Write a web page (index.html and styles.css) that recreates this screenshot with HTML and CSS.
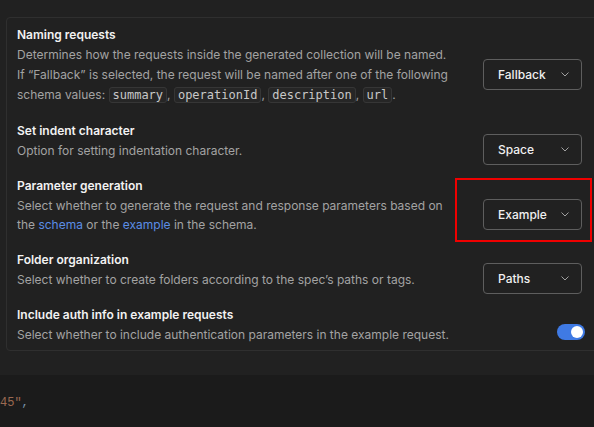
FILE: index.html
```html
<!DOCTYPE html>
<html>
<head>
<meta charset="utf-8">
<link rel="stylesheet" href="styles.css">
</head>
<body>
<div class="top">
  <div class="panel">
    <div class="row">
      <div class="text">
        <div class="title">Naming requests</div>
        <div class="desc">Determines how the requests inside the generated collection will be named.<br>If “Fallback” is selected, the request will be named after one of the following<br><span class="codeline">schema values: <code>summary</code>, <code>operationId</code>, <code>description</code>, <code>url</code>.</span></div>
      </div>
      <div class="ctl"><div class="select"><span>Fallback</span><svg class="chev" width="8" height="5" viewBox="0 0 8 5"><path d="M0.5 0.5l3.5 3.5 3.5-3.5" fill="none" stroke="#a0a0a0" stroke-width="1"/></svg></div></div>
    </div>
    <div class="row">
      <div class="text">
        <div class="title">Set indent character</div>
        <div class="desc">Option for setting indentation character.</div>
      </div>
      <div class="ctl"><div class="select"><span>Space</span><svg class="chev" width="8" height="5" viewBox="0 0 8 5"><path d="M0.5 0.5l3.5 3.5 3.5-3.5" fill="none" stroke="#a0a0a0" stroke-width="1"/></svg></div></div>
    </div>
    <div class="row">
      <div class="text">
        <div class="title">Parameter generation</div>
        <div class="desc">Select whether to generate the request and response parameters based on<br>the <a class="link">schema</a> or the <a class="link">example</a> in the schema.</div>
      </div>
      <div class="ctl"><div class="select"><span>Example</span><svg class="chev" width="8" height="5" viewBox="0 0 8 5"><path d="M0.5 0.5l3.5 3.5 3.5-3.5" fill="none" stroke="#a0a0a0" stroke-width="1"/></svg></div>
        <div class="highlight"></div></div>
    </div>
    <div class="row">
      <div class="text">
        <div class="title">Folder organization</div>
        <div class="desc">Select whether to create folders according to the spec’s paths or tags.</div>
      </div>
      <div class="ctl"><div class="select"><span>Paths</span><svg class="chev" width="8" height="5" viewBox="0 0 8 5"><path d="M0.5 0.5l3.5 3.5 3.5-3.5" fill="none" stroke="#a0a0a0" stroke-width="1"/></svg></div></div>
    </div>
    <div class="row row-last">
      <div class="text">
        <div class="title">Include auth info in example requests</div>
        <div class="desc">Select whether to include authentication parameters in the example request.</div>
      </div>
      <div class="ctl"><div class="toggle"><div class="knob"></div></div></div>
    </div>
  </div>
</div>
<div class="editor">
  <div class="code"><span class="str">45"</span><span class="punc">,</span></div>
</div>
</body>
</html>
```
FILE: styles.css
```css
html, body {
  margin: 0;
  padding: 0;
  background: #212121;
  overflow: hidden;
  width: 594px;
  height: 427px;
  font-family: Inter, "Noto Sans", sans-serif;
}
.top {
  background: #212121;
  padding: 17px 0 0 6px;
  height: 375px;
  box-sizing: border-box;
}
.panel {
  width: 620px;
  border: 1px solid #2f2f2f;
  border-radius: 4px;
  padding: 7px 0 5px 10px;
  box-sizing: border-box;
  display: flex;
  flex-direction: column;
  gap: 15px;
}
.row {
  display: flex;
  align-items: center;
  width: 565px;
}
.row-last {
  margin-top: 1px;
}
.text {
  flex: 1;
}
.title {
  color: #f2f2f2;
  font-size: 12px;
  font-weight: 600;
  line-height: 20px;
}
.desc {
  color: #a3a3a3;
  font-size: 12px;
  line-height: 19.5px;
}
.codeline {
  display: inline-block;
  line-height: 21px;
}
code {
  font-family: "DejaVu Sans Mono", "Liberation Mono", monospace;
  font-size: 12px;
  color: #c8c8c8;
  background: #262626;
  border: 1px solid #363636;
  border-radius: 3px;
  padding: 0 3px;
}
.link {
  color: #5b8ee6;
}
.ctl {
  position: relative;
  width: 99px;
  display: flex;
  justify-content: flex-end;
  margin-top: 9px;
  margin-bottom: -9px;
}
.select {
  width: 99px;
  height: 31px;
  box-sizing: border-box;
  border: 1px solid #5e5e5e;
  border-radius: 4px;
  display: flex;
  align-items: center;
  justify-content: space-between;
  padding: 0 12px 0 14px;
  color: #f0f0f0;
  font-size: 12px;
  font-weight: 500;
}
.chev {
  display: block;
}
.highlight {
  position: absolute;
  left: -28px;
  top: -21px;
  width: 137px;
  height: 64px;
  box-sizing: border-box;
  border: 2px solid #f00000;
}
.toggle {
  width: 28px;
  height: 16px;
  border-radius: 8px;
  background: #3f7ae4;
  position: relative;
  margin-right: -3px;
  margin-top: -3px;
}
.knob {
  position: absolute;
  right: 2px;
  top: 2px;
  width: 12px;
  height: 12px;
  border-radius: 50%;
  background: #ffffff;
}
.editor {
  background: #1b1b1b;
  height: 52px;
  padding-top: 20px;
  box-sizing: border-box;
}
.code {
  font-family: "Liberation Mono", monospace;
  font-size: 12px;
  line-height: 16px;
}
.str {
  color: #9c6a52;
}
.punc {
  color: #7a94a8;
}
```
